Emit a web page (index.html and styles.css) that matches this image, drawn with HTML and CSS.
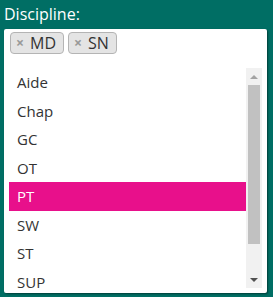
FILE: index.html
```html
<!DOCTYPE html>
<html lang="en">
<head>
  <meta charset="UTF-8" />
  <title>Discipline</title>
  <link rel="stylesheet" href="styles.css">
</head>
<body>

  <div class="field">
    <label class="field-label" for="disciplineList">Discipline:</label>

    <div class="picker">
      <!-- Selected tags -->
      <ul class="tags">
        <li class="tag"><span class="tag-remove">&times;</span>MD</li>
        <li class="tag"><span class="tag-remove">&times;</span>SN</li>
      </ul>

      <!-- Options + scrollbar -->
      <div class="list-wrap">
        <ul class="options" id="disciplineList" role="listbox">
          <li class="option">Aide</li>
          <li class="option">Chap</li>
          <li class="option">GC</li>
          <li class="option">OT</li>
          <li class="option active">PT</li>
          <li class="option">SW</li>
          <li class="option">ST</li>
          <li class="option">SUP</li>
          <li class="option">Vol</li>
        </ul>
        <div class="scrollbar">
          <div class="scroll-btn"><span class="arrow-up"></span></div>
          <div class="scroll-track"><div class="scroll-thumb"></div></div>
          <div class="scroll-btn"><span class="arrow-down"></span></div>
        </div>
      </div>
    </div>
  </div>

</body>
</html>
```

FILE: styles.css
```css
body {
  margin: 0;
  background: #006e64;
  font-family: "Open Sans", "DejaVu Sans", sans-serif;
  font-size: 15px;
}
.field { padding: 3px 6px 4px 4px; }
.field-label {
  display: block;
  color: #fff;
  font-size: 16px;
  line-height: 22px;
  margin-bottom: 4px;
}
/* white box holding tags and option list */
.picker {
  background: #fff;
  border-radius: 2px;
  box-shadow: 1px 1px 2px rgba(0,0,0,0.45);
  padding: 3px 5px 5px 5px;
}
.tags {
  list-style: none;
  margin: 0 0 14px 1px;
  padding: 0;
  display: flex;
  gap: 4px;
}
.tag {
  height: 20px;
  line-height: 20px;
  padding: 0 7px 0 5px;
  background: #e4e4e4;
  border: 1px solid #b4b4b4;
  border-radius: 4px;
  color: #333;
  font-size: 16px;
  display: flex;
  align-items: center;
}
.tag-remove {
  color: #999;
  font-weight: bold;
  font-size: 14px;
  margin-right: 6px;
}
.list-wrap {
  display: flex;
  height: 220px;
}
.options {
  list-style: none;
  margin: 0;
  padding: 0;
  flex: 1;
  overflow: hidden;
}
.option {
  height: 28.5px;
  padding-left: 8px;
  display: flex;
  align-items: center;
  color: #333;
}
.option.active {
  background: #e8108b;
  color: #fff;
}
/* fake classic scrollbar */
.scrollbar {
  width: 16px;
  background: #f1f1f1;
  display: flex;
  flex-direction: column;
}
.scroll-btn {
  height: 17px;
  display: flex;
  align-items: center;
  justify-content: center;
}
.scroll-track {
  flex: 1;
  padding: 0 2px;
}
.scroll-thumb {
  height: 159px;
  background: #c1c1c1;
}
.arrow-up, .arrow-down {
  width: 0;
  height: 0;
  border-left: 4px solid transparent;
  border-right: 4px solid transparent;
}
.arrow-up { border-bottom: 4px solid #a3a3a3; }
.arrow-down { border-top: 4px solid #505050; }
```
